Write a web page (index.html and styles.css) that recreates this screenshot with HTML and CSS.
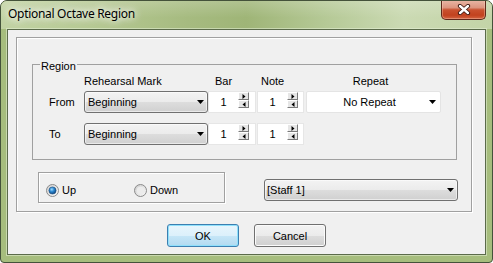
FILE: index.html
```html
<!DOCTYPE html>
<html>
<head>
<meta charset="utf-8">
<title>Optional Octave Region</title>
<link rel="stylesheet" href="styles.css">
</head>
<body>
<div class="window">
  <div class="titlebar">
    <span class="title">Optional Octave Region</span>
    <div class="close">
      <svg width="14" height="11" viewBox="0 0 14 11">
        <path d="M3 2 L11 9 M11 2 L3 9" stroke="#3a1810" stroke-width="4.2" stroke-linecap="round" fill="none"/>
        <path d="M3 2 L11 9 M11 2 L3 9" stroke="#ffffff" stroke-width="2.4" stroke-linecap="round" fill="none"/>
      </svg>
    </div>
  </div>
  <div class="client">
    <div class="panel">
      <fieldset class="region">
        <legend>Region</legend>
        <div class="region-body">
          <span></span>
          <span class="hdr">Rehearsal Mark</span>
          <span class="hdr bar">Bar</span>
          <span class="hdr note">Note</span>
          <span class="hdr repeat">Repeat</span>

          <span class="lbl">From</span>
          <div class="combo"><span class="ctext">Beginning</span><svg class="arrow" width="7" height="4" viewBox="0 0 7 4"><path d="M0 0 H7 L3.5 4 Z" fill="#000"/></svg></div>
          <div class="edit"><span class="val">1</span><div class="spin"><div class="sb"><svg width="4" height="5" viewBox="0 0 4 5"><path d="M0.5 0 L3.5 2.5 L0.5 5 Z" fill="#000"/></svg></div><div class="sb"><svg width="4" height="5" viewBox="0 0 4 5"><path d="M3.5 0 L0.5 2.5 L3.5 5 Z" fill="#000"/></svg></div></div></div>
          <div class="edit narrow"><span class="val">1</span><div class="spin"><div class="sb"><svg width="4" height="5" viewBox="0 0 4 5"><path d="M0.5 0 L3.5 2.5 L0.5 5 Z" fill="#000"/></svg></div><div class="sb"><svg width="4" height="5" viewBox="0 0 4 5"><path d="M3.5 0 L0.5 2.5 L3.5 5 Z" fill="#000"/></svg></div></div></div>
          <div class="combo white"><span class="ctext center">No Repeat</span><svg class="arrow" width="7" height="4" viewBox="0 0 7 4"><path d="M0 0 H7 L3.5 4 Z" fill="#000"/></svg></div>

          <span class="lbl">To</span>
          <div class="combo"><span class="ctext">Beginning</span><svg class="arrow" width="7" height="4" viewBox="0 0 7 4"><path d="M0 0 H7 L3.5 4 Z" fill="#000"/></svg></div>
          <div class="edit"><span class="val">1</span><div class="spin"><div class="sb"><svg width="4" height="5" viewBox="0 0 4 5"><path d="M0.5 0 L3.5 2.5 L0.5 5 Z" fill="#000"/></svg></div><div class="sb"><svg width="4" height="5" viewBox="0 0 4 5"><path d="M3.5 0 L0.5 2.5 L3.5 5 Z" fill="#000"/></svg></div></div></div>
          <div class="edit narrow"><span class="val">1</span><div class="spin"><div class="sb"><svg width="4" height="5" viewBox="0 0 4 5"><path d="M0.5 0 L3.5 2.5 L0.5 5 Z" fill="#000"/></svg></div><div class="sb"><svg width="4" height="5" viewBox="0 0 4 5"><path d="M3.5 0 L0.5 2.5 L3.5 5 Z" fill="#000"/></svg></div></div></div>
        </div>
      </fieldset>
      <div class="lower">
        <div class="radios">
          <label class="radio up">
            <svg width="13" height="13" viewBox="0 0 13 13">
              <defs>
                <radialGradient id="dot" cx="0.4" cy="0.35" r="0.7">
                  <stop offset="0" stop-color="#9fdcff"/>
                  <stop offset="0.45" stop-color="#2a86cf"/>
                  <stop offset="1" stop-color="#0b3f78"/>
                </radialGradient>
                <linearGradient id="ring" x1="0" y1="0" x2="1" y2="1">
                  <stop offset="0" stop-color="#cfcfcf"/>
                  <stop offset="1" stop-color="#fbfbfb"/>
                </linearGradient>
              </defs>
              <circle cx="6.5" cy="6.5" r="6" fill="url(#ring)" stroke="#8a8a8a"/>
              <circle cx="6.5" cy="6.5" r="3.6" fill="url(#dot)" stroke="#1d4d7d" stroke-width="0.6"/>
            </svg>
            <span>Up</span>
          </label>
          <label class="radio">
            <svg width="13" height="13" viewBox="0 0 13 13">
              <defs>
                <linearGradient id="ring2" x1="0" y1="0" x2="1" y2="1">
                  <stop offset="0" stop-color="#cbcbcb"/>
                  <stop offset="1" stop-color="#fbfbfb"/>
                </linearGradient>
              </defs>
              <circle cx="6.5" cy="6.5" r="6" fill="url(#ring2)" stroke="#8a8a8a"/>
              <circle cx="6.5" cy="6.5" r="3.8" fill="#ececec"/>
            </svg>
            <span>Down</span>
          </label>
        </div>
        <div class="combo staff"><span class="ctext">[Staff 1]</span><svg class="arrow" width="7" height="4" viewBox="0 0 7 4"><path d="M0 0 H7 L3.5 4 Z" fill="#000"/></svg></div>
      </div>
    </div>
    <div class="buttons">
      <div class="btn default">OK</div>
      <div class="btn">Cancel</div>
    </div>
  </div>
</div>
</body>
</html>
```
FILE: styles.css
```css
* { box-sizing: border-box; }
html, body { margin: 0; padding: 0; background: #ffffff; }
body {
  font-family: "Liberation Sans", Arial, sans-serif;
  font-size: 11px;
  color: #000;
}

.window {
  width: 493px;
  height: 263px;
  border: 1px solid #44523a;
  border-radius: 7px 7px 4px 4px;
  background: #a6bd7d;
  display: flex;
  flex-direction: column;
  overflow: hidden;
}

.titlebar {
  height: 28px;
  flex: none;
  display: flex;
  align-items: flex-start;
  padding: 0 6px 0 7px;
  background:
    linear-gradient(180deg, rgba(255,255,255,0.18), rgba(255,255,255,0) 60%),
    linear-gradient(90deg, #c2d3a3 0%, #b6c993 18%, #a6bb80 38%, #9fb577 50%, #b5c996 66%, #cbdab3 82%, #c3d4a7 100%);
}

.title {
  font-family: "Noto Sans", "Liberation Sans", sans-serif;
  font-size: 12px;
  line-height: 16px;
  letter-spacing: -0.3px;
  padding-top: 5px;
  color: #000;
  text-shadow: 0 0 6px #ffffff, 0 0 10px rgba(255,255,255,0.9), 0 0 14px rgba(255,255,255,0.7);
}

.close {
  margin-left: auto;
  margin-top: -1px;
  width: 45px;
  height: 20px;
  border: 1px solid #5e281b;
  border-top: none;
  border-radius: 0 0 5px 5px;
  background: linear-gradient(180deg, #e9b8a7 0%, #dc957f 40%, #c9512f 52%, #c2421f 80%, #d46442 100%);
  box-shadow: inset 0 0 0 1px rgba(255,220,200,0.35);
  display: flex;
  align-items: center;
  justify-content: center;
}

.client {
  flex: 1;
  margin: 0 6px 7px 6px;
  border: 1px solid #5b6b4a;
  background: #f0f0f0;
  box-shadow: 0 0 0 1px rgba(230,240,215,0.55);
  display: flex;
  flex-direction: column;
}

.panel {
  margin: 7px 13px 0 8px;
  border: 1px solid #a0a0a0;
  box-shadow: inset 1px 1px 0 #ffffff, 1px 1px 0 #ffffff;
  padding-bottom: 8px;
}

.region {
  margin: 18px 14px 0 15px;
  padding: 0;
  border: 1px solid #a0a0a0;
  min-width: 0;
}

.region legend {
  margin-left: 7px;
  padding: 4px 1px 0 1px;
  line-height: 13px;
}

.region-body {
  padding: 2px 0 14px 16px;
  display: grid;
  grid-template-columns: 35px 124px 49px 49px 135px;
  grid-template-rows: 16px 32px 22px;
  align-items: start;
}

.hdr { line-height: 13px; white-space: nowrap; }
.hdr.bar { padding-left: 7px; }
.hdr.note { padding-left: 4px; }
.hdr.repeat { text-align: center; padding-right: 6px; }

.lbl { line-height: 22px; }

.combo {
  height: 22px;
  border: 1px solid #707070;
  border-radius: 3px;
  background: linear-gradient(180deg, #f3f3f3 0%, #ebebeb 50%, #dddddd 51%, #d0d0d0 100%);
  box-shadow: inset 0 0 0 1px rgba(255,255,255,0.55);
  display: flex;
  align-items: center;
  padding-left: 3px;
}
.combo .ctext { flex: 1; white-space: nowrap; }
.combo .ctext.center { text-align: center; }
.combo .arrow { flex: none; margin-right: 3px; }

.combo.white {
  background: #ffffff;
  border: 1px solid #e4e4e4;
  border-radius: 2px;
  box-shadow: none;
}
.combo.white .arrow { margin-right: 4px; }

.combo.staff {
  width: 194px;
  margin: 7px 0 0 39px;
  padding-left: 2px;
}
.combo.staff .arrow { margin-right: 3px; }

.edit {
  width: 48px;
  height: 22px;
  background: #ffffff;
  border: 1px solid #e6e6e6;
  display: flex;
  align-items: flex-start;
}
.edit.narrow { width: 47px; }
.edit .val {
  width: 29px;
  line-height: 20px;
  text-align: center;
}
.spin {
  width: 11px;
  height: 16px;
  display: flex;
  flex-direction: column;
}
.sb {
  height: 8px;
  background: #e6e6e6;
  border: 1px solid;
  border-color: #ffffff #7a7a7a #7a7a7a #ffffff;
  display: flex;
  align-items: center;
  justify-content: center;
}
.sb svg { display: block; }

.lower {
  display: flex;
  align-items: flex-start;
  margin-top: 12px;
}

.radios {
  width: 187px;
  height: 31px;
  margin-left: 21px;
  border: 1px solid #a0a0a0;
  box-shadow: inset 1px 1px 0 #ffffff, 1px 1px 0 #ffffff;
  padding: 11px 0 0 7px;
  display: flex;
  align-items: flex-start;
}
.radio {
  display: flex;
  align-items: center;
  line-height: 13px;
}
.radio svg { display: block; flex: none; }
.radio span { margin-left: 3px; }
.radio.up { width: 88px; }

.buttons {
  display: flex;
  justify-content: center;
  gap: 15px;
  margin-top: 12px;
}
.btn {
  width: 72px;
  height: 23px;
  border: 1px solid #707070;
  border-radius: 3px;
  background: linear-gradient(180deg, #f3f3f3 0%, #ebebeb 50%, #dddddd 51%, #cfcfcf 100%);
  box-shadow: inset 0 0 0 1px #fbfbfb;
  display: flex;
  align-items: center;
  justify-content: center;
}
.btn.default {
  border-color: #3c7fb1;
  background: linear-gradient(180deg, #e8f5fc 0%, #dcf0fb 50%, #c6e6f7 51%, #b2daf0 100%);
  box-shadow: inset 0 0 0 1px #8fe0fb;
}
```
